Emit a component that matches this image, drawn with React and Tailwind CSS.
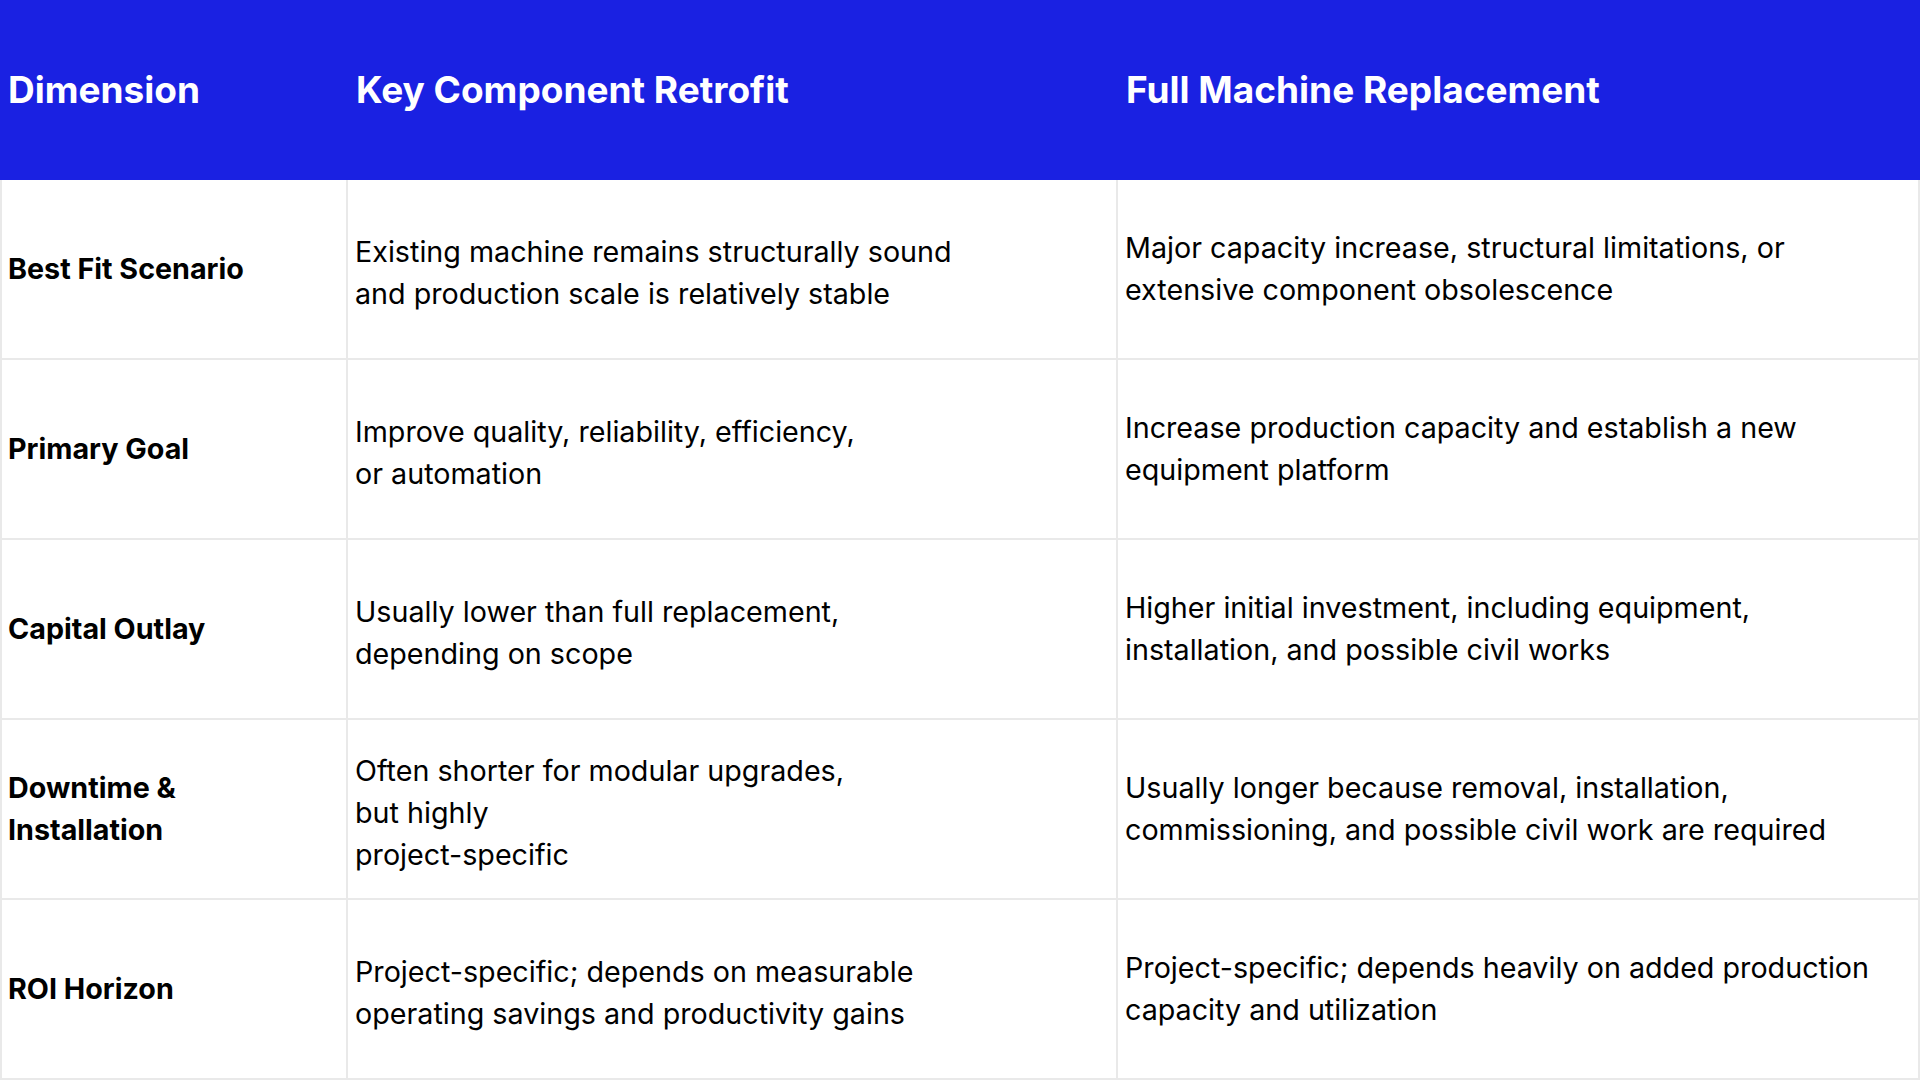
import React from 'react';

const rows = [
  {
    label: ['Best Fit Scenario'],
    retrofit: ['Existing machine remains structurally sound', 'and production scale is relatively stable'],
    replacement: ['Major capacity increase, structural limitations, or', 'extensive component obsolescence'],
  },
  {
    label: ['Primary Goal'],
    retrofit: ['Improve quality, reliability, efficiency,', 'or automation'],
    replacement: ['Increase production capacity and establish a new', 'equipment platform'],
  },
  {
    label: ['Capital Outlay'],
    retrofit: ['Usually lower than full replacement,', 'depending on scope'],
    replacement: ['Higher initial investment, including equipment,', 'installation, and possible civil works'],
  },
  {
    label: ['Downtime &', 'Installation'],
    retrofit: ['Often shorter for modular upgrades,', 'but highly', 'project-specific'],
    replacement: ['Usually longer because removal, installation,', 'commissioning, and possible civil work are required'],
  },
  {
    label: ['ROI Horizon'],
    retrofit: ['Project-specific; depends on measurable', 'operating savings and productivity gains'],
    replacement: ['Project-specific; depends heavily on added production', 'capacity and utilization'],
  },
];

const Lines = ({ lines }) =>
  lines.map((line, i) => (
    <React.Fragment key={i}>
      {i > 0 && <br />}
      {line}
    </React.Fragment>
  ));

const App = () => {
  return (
    <div className="w-[1920px] h-[1080px] overflow-hidden bg-white text-black font-['Inter',sans-serif]">
      <div className="grid grid-cols-[348px_770px_802px] h-[180px] bg-[#1a21e2] text-white text-[37px] font-bold">
        <div className="flex items-center pl-2">Dimension</div>
        <div className="flex items-center pl-2">Key Component Retrofit</div>
        <div className="flex items-center pl-2">Full Machine Replacement</div>
      </div>

      {rows.map((row, i) => (
        <div key={i} className="grid grid-cols-[348px_770px_802px] h-[180px] text-[28.7px] leading-[42px]">
          <div className="flex items-center pl-[6px] border-l-2 border-r-2 border-b-2 border-[#e9e9e9] font-bold">
            <p>
              <Lines lines={row.label} />
            </p>
          </div>
          <div className="flex items-center pl-[7px] pt-[8px] border-r-2 border-b-2 border-[#e9e9e9]">
            <p>
              <Lines lines={row.retrofit} />
            </p>
          </div>
          <div className="flex items-center pl-[7px] border-r-2 border-b-2 border-[#e9e9e9]">
            <p>
              <Lines lines={row.replacement} />
            </p>
          </div>
        </div>
      ))}
    </div>
  );
};

export default App;
